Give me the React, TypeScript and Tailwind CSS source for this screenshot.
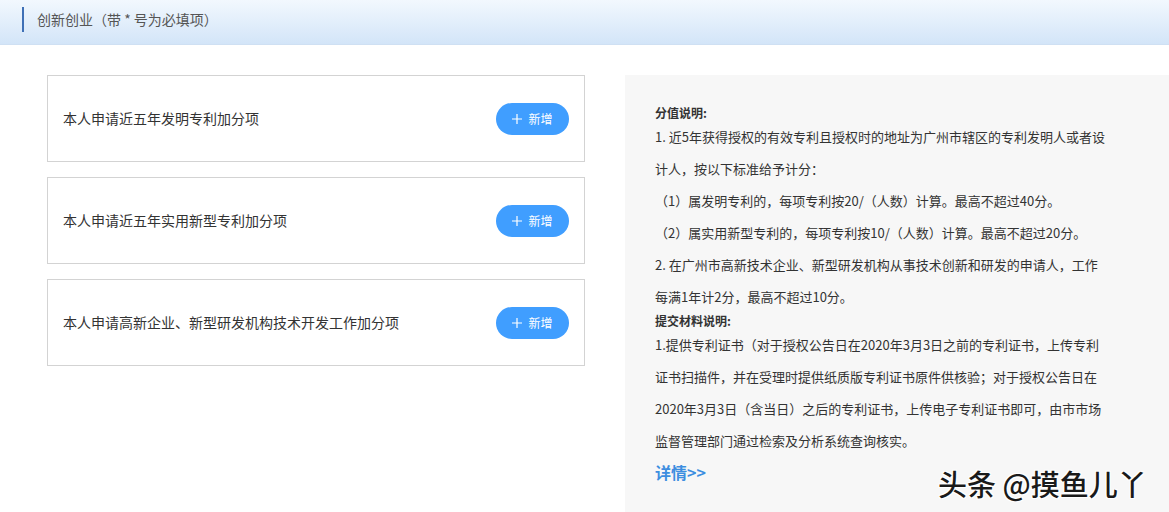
const items = [
  "本人申请近五年发明专利加分项",
  "本人申请近五年实用新型专利加分项",
  "本人申请高新企业、新型研发机构技术开发工作加分项",
];

const font = { fontFamily: '"Microsoft YaHei", "Noto Sans CJK SC", sans-serif' };

function AddButton() {
  return (
    <button className="flex h-[32px] w-[73px] items-center justify-center gap-[6px] rounded-full bg-[#409eff] text-[12px] text-white">
      <svg width="10" height="10" viewBox="0 0 10 10" fill="none" stroke="white" strokeWidth="1.2">
        <path d="M5 0v10M0 5h10" />
      </svg>
      新增
    </button>
  );
}

export default function App() {
  return (
    <div className="relative h-[512px] w-[1169px] overflow-hidden bg-white" style={font}>
      <div className="flex h-[45px] items-center border-b border-[#cfe0f3] bg-gradient-to-b from-[#f2f8fe] to-[#d3e5f8] pb-[5px] pl-[22px]">
        <span className="h-[25px] w-[2px] bg-[#3f70b6]" />
        <span className="ml-[13px] text-[14px] text-[#555]">创新创业（带 * 号为必填项）</span>
      </div>
      <div className="mt-[30px] flex gap-[40px] pl-[47px]">
        <div className="flex w-[538px] flex-col gap-[15px]">
          {items.map((t) => (
            <div
              key={t}
              className="flex h-[87px] items-center justify-between border border-[#d3d3d3] pl-[15px] pr-[15px]"
            >
              <span className="text-[14px] text-[#333]">{t}</span>
              <AddButton />
            </div>
          ))}
        </div>
        <div className="min-h-[440px] flex-1 bg-[#f7f7f7] pb-[20px] pl-[30px] pt-[30px] text-[13px] text-[#333]">
          <div className="w-[450px]">
            <p className="text-[12px] font-bold leading-[16px]">分值说明:</p>
            <p className="leading-[32px]">1. 近5年获得授权的有效专利且授权时的地址为广州市辖区的专利发明人或者设计人，按以下标准给予计分：</p>
            <p className="leading-[32px]">（1）属发明专利的，每项专利按20/（人数）计算。最高不超过40分。</p>
            <p className="leading-[32px]">（2）属实用新型专利的，每项专利按10/（人数）计算。最高不超过20分。</p>
            <p className="leading-[32px]">2. 在广州市高新技术企业、新型研发机构从事技术创新和研发的申请人，工作每满1年计2分，最高不超过10分。</p>
            <p className="text-[12px] font-bold leading-[16px]">提交材料说明:</p>
            <p className="leading-[32px]">
              1.提供专利证书（对于授权公告日在2020年3月3日之前的专利证书，上传专利证书扫描件，并在受理时提供纸质版专利证书原件供核验；对于授权公告日在2020年3月3日（含当日）之后的专利证书，上传电子专利证书即可，由市市场监督管理部门通过检索及分析系统查询核实。
            </p>
            <a className="mt-[3px] block text-[16px] font-bold leading-[24px] text-[#3d8ee0]">详情&gt;&gt;</a>
          </div>
        </div>
      </div>
      <div
        className="absolute left-[938px] top-[465px] text-[29px] font-medium leading-[36px] text-[#1a1a1a]"
        style={{ textShadow: "1px 1px 0 #fff, -1px -1px 0 #fff, 1px -1px 0 #fff, -1px 1px 0 #fff" }}
      >
        头条 @摸鱼儿丫
      </div>
    </div>
  );
}
